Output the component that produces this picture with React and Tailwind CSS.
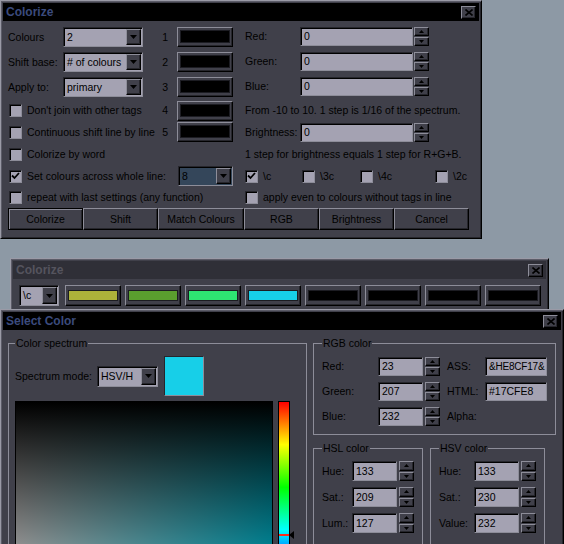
import React from "react";

const FONT = "font-['Liberation_Sans',Arial,sans-serif]";
const RAISED =
  "border border-t-[#8d8d99] border-l-[#8d8d99] border-r-black border-b-black shadow-[inset_-1px_-1px_0_#26262c]";
const SUNKEN =
  "border border-t-[#26262c] border-l-[#26262c] border-r-[#8d8d99] border-b-[#8d8d99] shadow-[inset_1px_1px_0_#000]";

const CloseButton = () => (
  <div className={`flex h-[13px] w-[15px] items-center justify-center bg-[#40404a] ${RAISED}`}>
    <svg width="8" height="7" viewBox="0 0 8 7">
      <path d="M0.5 0.5L7.5 6.5M7.5 0.5L0.5 6.5" stroke="#000" strokeWidth="1.6" />
    </svg>
  </div>
);

const Window = ({ className, title, active = true, children }) => (
  <div
    className={`absolute flex flex-col border border-t-[#9a9aa6] border-l-[#9a9aa6] border-r-black border-b-black bg-[#40404a] p-[2px] text-[#000000] shadow-[inset_1px_1px_0_#5c5c68,inset_-1px_-1px_0_#26262c] ${className}`}
  >
    <div
      className={`flex h-[18px] shrink-0 items-center justify-between pl-[3px] pr-[3px] ${
        active ? "bg-black text-[#3b4b7d]" : "bg-[#2f2f37] text-[#55545e]"
      }`}
    >
      <span className="text-[12px] font-bold">{title}</span>
      <CloseButton />
    </div>
    {children}
  </div>
);

const ArrowDown = () => (
  <svg width="7" height="4" viewBox="0 0 7 4">
    <path d="M0 0h7L3.5 4z" fill="#000" />
  </svg>
);

const Dropdown = ({ value, className = "", field = "bg-[#a4a2b2]" }) => (
  <div className={`flex p-[1px] ${SUNKEN} ${field} ${className}`}>
    <span className="flex flex-1 items-center overflow-hidden whitespace-nowrap pl-[2px]">{value}</span>
    <div className={`flex w-[15px] items-center justify-center bg-[#40404a] ${RAISED}`}>
      <ArrowDown />
    </div>
  </div>
);

const Field = ({ value, className = "" }) => (
  <div className={`flex items-center overflow-hidden whitespace-nowrap bg-[#a4a2b2] pl-[3px] ${SUNKEN} ${className}`}>
    {value}
  </div>
);

const Spinner = ({ className = "" }) => (
  <div className={`flex w-[15px] flex-col gap-px ${className}`}>
    <div className={`flex flex-1 items-center justify-center bg-[#40404a] ${RAISED}`}>
      <svg width="5" height="3" viewBox="0 0 5 3">
        <path d="M0 3h5L2.5 0z" fill="#000" />
      </svg>
    </div>
    <div className={`flex flex-1 items-center justify-center bg-[#40404a] ${RAISED}`}>
      <svg width="5" height="3" viewBox="0 0 5 3">
        <path d="M0 0h5L2.5 3z" fill="#000" />
      </svg>
    </div>
  </div>
);

const Swatch = ({ color, className = "", pad = "px-[2px] pt-[2px] pb-[3px]" }) => (
  <div className={`flex bg-[#40404a] ${RAISED} ${pad} ${className}`}>
    <div className={`flex-1 border border-[#1c1c22] ${color}`} />
  </div>
);

const CheckItem = ({ label, checked = false, className = "" }) => (
  <div className={`flex items-center pl-px ${className}`}>
    <div className={`flex h-[13px] w-[13px] shrink-0 items-center justify-center bg-[#a4a2b2] ${SUNKEN}`}>
      {checked && (
        <svg width="9" height="8" viewBox="0 0 9 8">
          <path d="M1 3.5L3.5 6L8 1" stroke="#000" strokeWidth="1.8" fill="none" />
        </svg>
      )}
    </div>
    <span className="ml-[5px] whitespace-nowrap">{label}</span>
  </div>
);

const Button = ({ label, width, primary = false }) => (
  <div
    className={`flex h-[22px] items-center justify-center bg-[#40404a] ${width} ${
      primary
        ? "border border-black shadow-[inset_1px_1px_0_#8d8d99,inset_-1px_-1px_0_#26262c]"
        : RAISED
    }`}
  >
    {label}
  </div>
);

const ColorizeWindow = () => (
  <Window className="left-0 top-0 h-[239px] w-[482px]" title="Colorize">
    <div className="ml-[5px] mt-[4px] grid grid-cols-[236px_230px] grid-rows-[25px_25px_25px_21px_22px_22px_22px_21px] whitespace-nowrap">
      {/* row 1 */}
      <div className="flex items-start pt-[2px]">
        <span className="flex h-[20px] w-[55px] items-center">Colours</span>
        <Dropdown value="2" className="h-[20px] w-[80px]" />
        <span className="flex h-[20px] w-[34px] items-center justify-end pr-[9px]">1</span>
        <Swatch color="bg-black" className="h-[20px] w-[56px]" />
      </div>
      <div className="flex items-start pl-px pt-[2px]">
        <span className="flex h-[19px] w-[55px] items-center">Red:</span>
        <Field value="0" className="h-[19px] w-[113px]" />
        <Spinner className="ml-px h-[19px]" />
      </div>
      {/* row 2 */}
      <div className="flex items-start pt-[2px]">
        <span className="flex h-[20px] w-[55px] items-center">Shift base:</span>
        <Dropdown value="# of colours" className="h-[20px] w-[80px]" />
        <span className="flex h-[20px] w-[34px] items-center justify-end pr-[9px]">2</span>
        <Swatch color="bg-black" className="h-[20px] w-[56px]" />
      </div>
      <div className="flex items-start pl-px pt-[2px]">
        <span className="flex h-[19px] w-[55px] items-center">Green:</span>
        <Field value="0" className="h-[19px] w-[113px]" />
        <Spinner className="ml-px h-[19px]" />
      </div>
      {/* row 3 */}
      <div className="flex items-start pt-[2px]">
        <span className="flex h-[20px] w-[55px] items-center">Apply to:</span>
        <Dropdown value="primary" className="h-[20px] w-[80px]" />
        <span className="flex h-[20px] w-[34px] items-center justify-end pr-[9px]">3</span>
        <Swatch color="bg-black" className="h-[20px] w-[56px]" />
      </div>
      <div className="flex items-start pl-px pt-[2px]">
        <span className="flex h-[19px] w-[55px] items-center">Blue:</span>
        <Field value="0" className="h-[19px] w-[113px]" />
        <Spinner className="ml-px h-[19px]" />
      </div>
      {/* row 4 */}
      <div className="flex items-center">
        <CheckItem label="Don't join with other tags" className="w-[135px]" />
        <span className="w-[34px] pr-[9px] text-right">4</span>
        <Swatch color="bg-black" className="h-[20px] w-[56px]" />
      </div>
      <div className="flex items-center pl-px">From -10 to 10. 1 step is 1/16 of the spectrum.</div>
      {/* row 5 */}
      <div className="flex items-center">
        <CheckItem label="Continuous shift line by line" className="w-[135px]" />
        <span className="w-[34px] pr-[9px] text-right">5</span>
        <Swatch color="bg-black" className="h-[20px] w-[56px]" />
      </div>
      <div className="flex items-center pl-px">
        <span className="flex h-[19px] w-[55px] items-center">Brightness:</span>
        <Field value="0" className="h-[19px] w-[113px]" />
        <Spinner className="ml-px h-[19px]" />
      </div>
      {/* row 6 */}
      <div className="flex items-center">
        <CheckItem label="Colorize by word" />
      </div>
      <div className="flex items-center pl-px">1 step for brightness equals 1 step for R+G+B.</div>
      {/* row 7 */}
      <div className="flex items-center">
        <CheckItem label="Set colours across whole line:" checked />
        <Dropdown value="8" field="bg-[#34465a]" className="ml-auto mr-[11px] h-[20px] w-[55px]" />
      </div>
      <div className="flex items-center">
        <CheckItem label={"\\c"} checked className="w-[57px]" />
        <CheckItem label={"\\3c"} className="w-[58px]" />
        <CheckItem label={"\\4c"} className="w-[75px]" />
        <CheckItem label={"\\2c"} />
      </div>
      {/* row 8 */}
      <div className="flex items-center">
        <CheckItem label="repeat with last settings (any function)" />
      </div>
      <div className="flex items-center">
        <CheckItem label="apply even to colours without tags in line" />
      </div>
    </div>
    <div className="ml-[5px] flex">
      <Button label="Colorize" width="w-[75px]" primary />
      <Button label="Shift" width="w-[75px]" />
      <Button label="Match Colours" width="w-[86px]" />
      <Button label="RGB" width="w-[75px]" />
      <Button label="Brightness" width="w-[75px]" />
      <Button label="Cancel" width="w-[75px]" />
    </div>
  </Window>
);

const PaletteWindow = () => (
  <Window className="left-[10px] top-[258px] h-[64px] w-[539px]" title="Colorize" active={false}>
    <div className="ml-[6px] mt-[6px] flex items-center">
      <Dropdown value={"\\c"} className="h-[21px] w-[40px]" />
      <div className="ml-[6px] flex gap-[4px]">
        {["bg-[#adb23a]", "bg-[#5a9e2e]", "bg-[#2ee472]", "bg-[#17cfe8]", "bg-black", "bg-black", "bg-black", "bg-black"].map(
          (c, i) => (
            <Swatch key={i} color={c} pad="px-[2px] pt-[4px] pb-[4px]" className="h-[21px] w-[56px]" />
          )
        )}
      </div>
    </div>
  </Window>
);

const Group = ({ title, className = "", children }) => (
  <fieldset className={`border border-[#8d8d99] ${className}`}>
    <legend className="px-[1px] leading-[13px]">{title}</legend>
    {children}
  </fieldset>
);

const NumRow = ({ label, value, labelW, inputH = "h-[19px]" }) => (
  <div className="flex items-center">
    <span className={labelW}>{label}</span>
    <Field value={value} className={`${inputH} w-[45px]`} />
    <Spinner className={`ml-[2px] ${inputH}`} />
  </div>
);

const SelectColorWindow = () => (
  <Window className="left-0 top-[309px] h-[260px] w-[564px]" title="Select Color">
    <div className="ml-[5px] mt-[7px] flex items-start whitespace-nowrap">
      <Group title="Color spectrum" className="h-[240px] w-[299px] px-[6px]">
        <div className="mt-[6px] flex items-center">
          <span className="w-[82px]">Spectrum mode:</span>
          <Dropdown value="HSV/H" className="h-[21px] w-[61px]" />
          <div className="ml-[6px] h-[40px] w-[40px] border border-t-[#26262c] border-l-[#26262c] border-r-[#8d8d99] border-b-[#8d8d99] bg-[#17cfe8]" />
        </div>
        <div className="mt-[5px] flex items-start">
          <div className="h-[258px] w-[258px] border border-black bg-[linear-gradient(to_right,#ffffff,#00e2ff)]">
            <div className="h-full w-full bg-[linear-gradient(to_bottom,#000000,rgba(0,0,0,0))]" />
          </div>
          <div className="relative ml-[5px] h-[258px] w-[12px] border border-black bg-[linear-gradient(to_bottom,#ff0000,#ffff00,#00ff00,#00ffff,#0000ff,#ff00ff,#ff0000)]">
            <div className="absolute left-0 right-0 top-[132px] h-[2px] bg-[#ff2a1a]" />
            <svg className="absolute left-[10px] top-[129px]" width="6" height="8" viewBox="0 0 6 8">
              <path d="M0 4L5 0V8z" fill="#000" />
            </svg>
          </div>
        </div>
      </Group>

      <div className="ml-[6px] flex w-[243px] flex-col">
        <Group title="RGB color" className="w-[243px] px-[8px] pb-[8px] pt-[7px]">
          <div className="flex flex-col gap-[6px]">
            <div className="flex items-center">
              <NumRow label="Red:" value="23" labelW="w-[56px]" />
              <span className="ml-[7px] w-[38px]">ASS:</span>
              <Field value="&HE8CF17&" className="h-[19px] w-[62px] pl-[2px] text-[10px] tracking-[-0.2px]" />
            </div>
            <div className="flex items-center">
              <NumRow label="Green:" value="207" labelW="w-[56px]" />
              <span className="ml-[7px] w-[38px]">HTML:</span>
              <Field value="#17CFE8" className="h-[19px] w-[62px]" />
            </div>
            <div className="flex items-center">
              <NumRow label="Blue:" value="232" labelW="w-[56px]" />
              <span className="ml-[7px] w-[38px]">Alpha:</span>
            </div>
          </div>
        </Group>
        <div className="mt-[7px] flex gap-[7px]">
          <Group title="HSL color" className="h-[110px] w-[109px] px-[8px] pt-[6px]">
            <div className="flex flex-col gap-[6px]">
              <NumRow label="Hue:" value="133" labelW="w-[30px]" inputH="h-[20px]" />
              <NumRow label="Sat.:" value="209" labelW="w-[30px]" inputH="h-[20px]" />
              <NumRow label="Lum.:" value="127" labelW="w-[30px]" inputH="h-[20px]" />
            </div>
          </Group>
          <Group title="HSV color" className="h-[110px] w-[113px] px-[8px] pt-[6px]">
            <div className="flex flex-col gap-[6px]">
              <NumRow label="Hue:" value="133" labelW="w-[35px]" inputH="h-[20px]" />
              <NumRow label="Sat.:" value="230" labelW="w-[35px]" inputH="h-[20px]" />
              <NumRow label="Value:" value="232" labelW="w-[35px]" inputH="h-[20px]" />
            </div>
          </Group>
        </div>
      </div>
    </div>
  </Window>
);

export default function App() {
  return (
    <div className={`relative h-[544px] w-[564px] overflow-hidden bg-[#8d99a5] text-[10.5px] leading-[13px] text-black ${FONT}`}>
      <ColorizeWindow />
      <PaletteWindow />
      <SelectColorWindow />
    </div>
  );
}
